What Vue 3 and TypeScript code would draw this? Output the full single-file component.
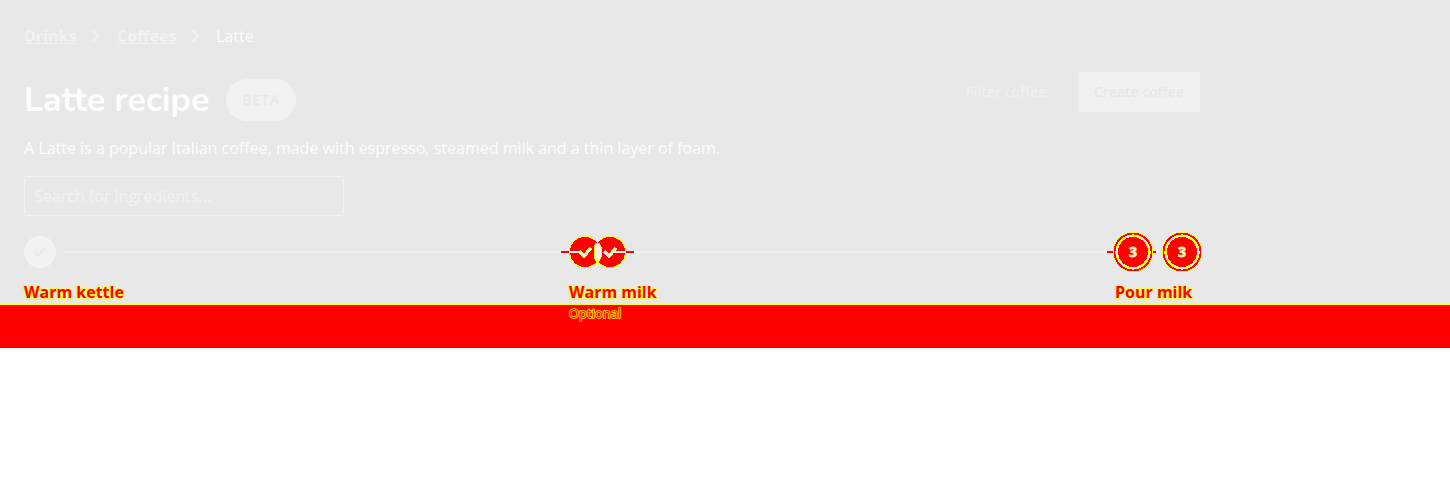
<script setup lang="ts">
const crumbs: string[] = ['Drinks', 'Coffees']
const rings: number[] = [1133, 1182]
const ticks: number[] = [585, 610]
</script>

<template>
  <main class="page">
    <nav class="crumbs">
      <template v-for="c in crumbs" :key="c">
        <a :class="c.toLowerCase()">{{ c }}</a>
        <svg class="chevron" width="8" height="14" viewBox="0 0 8 14"><path d="M1 2l5 5-5 5" /></svg>
      </template>
      <span class="current">Latte</span>
    </nav>
    <header class="header">
      <div class="heading">
        <h1>Latte recipe</h1>
        <span class="badge">BETA</span>
      </div>
      <div class="actions">
        <button class="link">Filter coffee</button>
        <button class="primary">Create coffee</button>
      </div>
    </header>
    <p class="intro">A Latte is a popular Italian coffee, made with espresso, steamed milk and a thin layer of foam.</p>
    <div class="search">Search for ingredients...</div>
    <svg class="track" width="1226" height="44" viewBox="0 230 1226 44">
      <circle cx="40" cy="252" r="16" fill="#f2f2f2" />
      <path d="M34.500 252.500l3.500 3.500 7-8" fill="none" stroke="#e8e8e8" stroke-width="1.700" />
      <path d="M64 252H561M634 252H1107" stroke="#f2f2f2" stroke-width="2" />
      <g shape-rendering="crispEdges">
        <path d="M561 252H569M626 252H634M1107 252H1114M1152 252H1156" stroke="red" stroke-width="2" />
        <circle v-for="x in ticks" :key="x" :cx="x" cy="252" r="15.500" fill="red" stroke="#ff0" />
        <path d="M596 243.500h3l2 4v9l-2 4h-3l-2-4v-9z" fill="#f2f2f2" stroke="#ff0" />
        <path d="M596 244h4v3h1v10h-1v3h-4v-3h-1v-10h1z" fill="#f2f2f2" />
        <path d="M569 252H581M613 252H626" stroke="#f2f2f2" stroke-width="2" />
        <path d="M579 251.500l5 4.500 7-8M604 251.500l5 4.500 7-8" fill="none" stroke="#ff0" stroke-width="3.500" />
      </g>
      <path d="M579 251.500l5 4.500 7-8M604 251.500l5 4.500 7-8" fill="none" stroke="#eee" stroke-width="2.500" />
      <g v-for="x in rings" :key="x" shape-rendering="crispEdges">
        <circle :cx="x" cy="252" r="18.500" fill="#e8e8e8" stroke="#ff0" stroke-width="3" />
        <circle :cx="x" cy="252" r="18.500" fill="none" stroke="red" stroke-width="1.800" />
        <circle :cx="x" cy="252" r="15.500" fill="red" stroke="#ff0" />
      </g>
      <text v-for="x in rings" :key="x" :x="x" y="257" text-anchor="middle" class="number">3</text>
    </svg>
    <div class="labels">
      <span class="label">Warm kettle</span>
      <span class="label">Warm milk</span>
      <span class="label">Pour milk</span>
    </div>
    <div class="band"><span class="optional">Optional</span></div>
  </main>
</template>

<style>
body { background: #fff; }
</style>

<style scoped>
.page {
  width: 1450px;
  height: 348px;
  box-sizing: border-box;
  padding-top: 24px;
  background: #e8e8e8;
  color: #fdfdfd;
  font: 16px/24px "Open Sans", sans-serif;
  overflow: hidden;
}
.crumbs { display: flex; align-items: center; height: 24px; margin-left: 24px; }
.crumbs a { font-weight: 700; color: #f2f2f2; text-decoration: underline; }
.drinks { width: 52px; }
.coffees { width: 59px; }
.chevron { margin: 0 17px 0 16px; flex: none; }
.chevron path { fill: none; stroke: #f3f3f3; stroke-width: 2; }
.current { margin-left: -1px; }
.header { display: flex; justify-content: space-between; width: 1176px; height: 74px; margin: 24px 0 0 24px; }
.heading { display: flex; align-items: center; height: 56px; }
h1 { width: 185px; margin: 0 17px 0 0; font: 700 34px/56px Nunito, "Nunito Sans", Lato, sans-serif; white-space: nowrap; }
.badge {
  width: 70px;
  height: 42px;
  border-radius: 21px;
  background: #f2f2f2;
  color: #e8e8e8;
  font-size: 14px;
  font-weight: 600;
  line-height: 42px;
  letter-spacing: 0.8px;
  text-align: center;
}
.actions { display: flex; }
button {
  height: 40px;
  padding: 0;
  border: 0;
  border-radius: 2px;
  background: none;
  font: 600 14px/40px "Open Sans", sans-serif;
  white-space: nowrap;
}
.link { width: 80px; margin-right: 32px; color: #f0f0f0; }
.primary { width: 122px; background: #f1f1f1; color: #e7e7e7; }
.intro { margin: -10px 0 16px 24px; }
.search {
  box-sizing: border-box;
  width: 320px;
  height: 40px;
  margin-left: 24px;
  padding-left: 9px;
  border: 1px solid #f2f2f2;
  border-radius: 2px;
  color: #f3f3f3;
  line-height: 38px;
}
.track { display: block; margin-top: 14px; }
.number { font: 700 14px "Open Sans", sans-serif; fill: #eee; stroke: #ff0; stroke-width: 0.8px; paint-order: stroke; }
.labels {
  display: grid;
  grid-template-columns: 545px 546px 1fr;
  height: 30px;
  padding-left: 24px;
  color: red;
  font-weight: 700;
  line-height: 36px;
}
.label { -webkit-text-stroke: 1.5px #ff0; paint-order: stroke fill; }
.band { height: 43px; border-top: 1px solid #ff0; background: red; }
.optional {
  display: block;
  margin-left: 569px;
  font-size: 13px;
  line-height: 17px;
  color: red;
  -webkit-text-stroke: 1.3px #ff0;
  paint-order: stroke fill;
}
</style>
